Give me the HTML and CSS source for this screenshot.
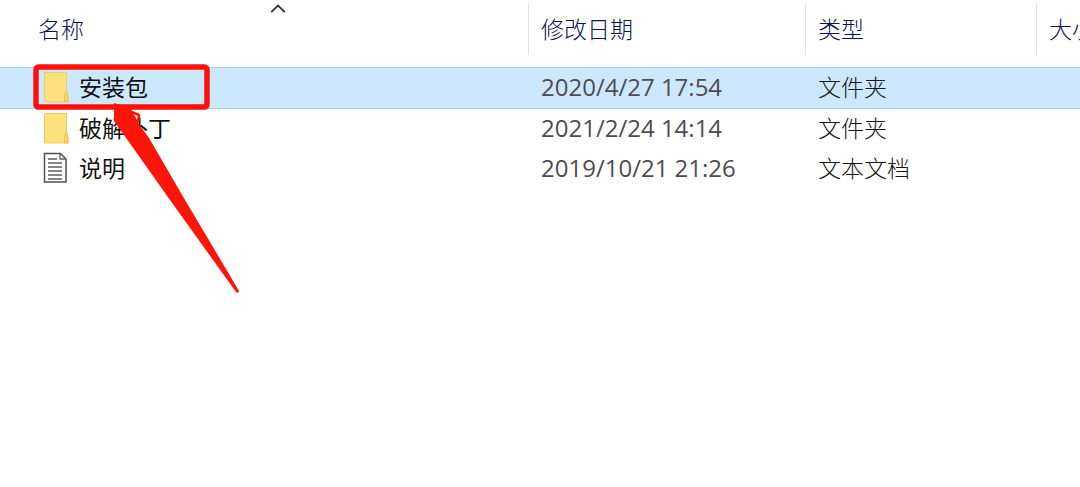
FILE: index.html
```
<!DOCTYPE html>
<html lang="zh-CN">
<head>
<meta charset="utf-8">
<title>文件列表</title>
<link rel="stylesheet" href="styles.css">
</head>
<body>
<main class="explorer">
  <table class="files">
    <colgroup>
      <col class="col-name"><col class="col-date"><col class="col-type"><col>
    </colgroup>
    <thead>
      <tr>
        <th scope="col" aria-sort="ascending"><button class="sort sort-name" type="button">名称<svg class="caret" width="16" height="10" viewBox="0 0 16 10" aria-hidden="true"><path d="M1.200 8.200 8 1.600l6.800 6.600" fill="none" stroke="#333" stroke-width="1.800"/></svg></button></th>
        <th scope="col"><button class="sort" type="button">修改日期</button></th>
        <th scope="col"><button class="sort" type="button">类型</button></th>
        <th scope="col"><button class="sort" type="button">大小</button></th>
      </tr>
    </thead>
    <tbody>
      <tr class="selected">
        <td class="name-cell"><span class="name"><svg class="icon" width="26" height="32" viewBox="0 0 26 32" aria-hidden="true"><path d="M1.500 1.500h22V21l1.500 5v5H1.500z" fill="#fde17c" stroke="#efcb66"/><path d="M23.500 19.500 21.500 24v7H25v-5z" fill="#fbd85f" stroke="#e8be4c" stroke-width=".8"/></svg>安装包</span>
          <svg class="marker" width="210" height="232" viewBox="0 0 210 232" aria-hidden="true"><rect x="3" y="3" width="171" height="40" rx="2.500" fill="none" stroke="#fd1009" stroke-width="5.500"/><path d="M81 39 97 44 103 54 106 60 116 74 152 136 177 178 206 227q0 3-3 1L160 168 137 136 96 78 81 57z" fill="#fd1509"/><path d="M84 41 96 47 106 51 105 58" fill="none" stroke="#fd1509" stroke-width="2.500" stroke-linejoin="round"/></svg>
        </td>
        <td>2020/4/27 17:54</td>
        <td>文件夹</td>
        <td></td>
      </tr>
      <tr>
        <td><span class="name"><svg class="icon" width="26" height="32" viewBox="0 0 26 32" aria-hidden="true"><path d="M1.500 1.500h22V21l1.500 5v5H1.500z" fill="#fde17c" stroke="#efcb66"/><path d="M23.500 19.500 21.500 24v7H25v-5z" fill="#fbd85f" stroke="#e8be4c" stroke-width=".8"/></svg>破解补丁</span></td>
        <td>2021/2/24 14:14</td>
        <td>文件夹</td>
        <td></td>
      </tr>
      <tr>
        <td><span class="name"><svg class="icon" width="26" height="32" viewBox="0 0 26 32" aria-hidden="true"><path d="M1.500 1.500h16l5.500 5.500v23H1.500z" fill="#fff" stroke="#554e52" stroke-width="1.500"/><path d="M17 1.500v5.500h6M5 7h9M5 11h14M5 15h14M5 19h14M5 23h14M5 27h14" fill="none" stroke="#625c62" stroke-width="1.300"/></svg>说明</span></td>
        <td>2019/10/21 21:26</td>
        <td>文本文档</td>
        <td></td>
      </tr>
    </tbody>
  </table>
</main>
</body>
</html>
```
FILE: styles.css
```
* { box-sizing: border-box; }
body {
  margin: 0;
  background: #fff;
  color: #383236;
  font-family: "Open Sans", "Noto Sans CJK SC", sans-serif;
  font-size: 23px;
  line-height: 32px;
}
.explorer {
  min-height: 100vh;
  overflow: hidden;
}
.files {
  width: 100%;
  table-layout: fixed;
  border-collapse: separate;
  border-spacing: 0;
}
.col-name { width: 529px; }
.col-date { width: 277px; }
.col-type { width: 231px; }
th {
  height: 67px;
  padding: 3px 0 12px;
  text-align: left;
  font-weight: 300;
}
.sort {
  position: relative;
  display: block;
  width: 100%;
  height: 52px;
  margin: 0;
  padding: 0 0 0 12px;
  border: 0;
  border-right: 1px solid #e2e2e4;
  background: none;
  color: #0c1250;
  font: inherit;
  text-align: left;
  white-space: nowrap;
}
th:last-child .sort { border-right: 0; }
.sort-name { padding-left: 38px; }
.caret {
  position: absolute;
  top: 1px;
  left: 270px;
}
td {
  height: 40px;
  padding: 0 0 2px 12px;
  font-weight: 300;
  white-space: nowrap;
  color: #1a1418;
}
td:nth-child(2) {
  color: #514b4f;
  font-size: 24px;
  font-weight: 400;
}
td:first-child {
  padding-left: 43px;
  color: #111;
  font-weight: 400;
}
.selected td {
  height: 42px;
  background: #cce8ff;
  border-top: 1px solid #99cdf5;
  border-bottom: 1px solid #99cdf5;
}
.name {
  display: flex;
  align-items: center;
  gap: 10px;
}
.icon { flex: none; }
.name-cell { position: relative; }
.marker {
  position: absolute;
  z-index: 1;
  top: -4px;
  left: 33px;
}
```
